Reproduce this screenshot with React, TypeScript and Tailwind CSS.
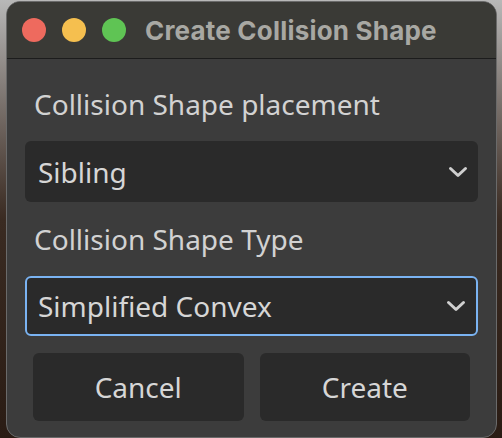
import React from "react";

function Chevron() {
  return (
    <svg width="20" height="12" viewBox="0 0 20 12" fill="none">
      <path d="M2.5 2.5L10 9.5L17.5 2.5" stroke="#cfcfcf" strokeWidth="3" strokeLinecap="round" strokeLinejoin="round" />
    </svg>
  );
}

function Select({ value, focused }: { value: string; focused?: boolean }) {
  return (
    <div
      className={`flex items-center justify-between rounded-[6px] bg-[#2a2a2a] pr-[10px] ${
        focused ? "h-[60px] border-2 border-[#7ab3f2] pl-[11px]" : "h-[61px] pl-[13px]"
      }`}
    >
      <span className="text-[28px] leading-[38px] text-[#d6d6d6]">{value}</span>
      <Chevron />
    </div>
  );
}

export default function App() {
  return (
    <div
      className="w-[502px] h-[438px] overflow-hidden bg-gradient-to-b from-[#b8b8b8] via-[#3a2b22] to-[#2a1c14] pt-[1px] pl-[6px]"
      style={{ fontFamily: '"Noto Sans", sans-serif' }}
    >
      <div className="w-[491px] h-[437px] rounded-[14px] border border-[#6a6a6a] bg-[#3c3c3c] overflow-hidden flex flex-col">
        {/* title bar */}
        <div className="h-[57px] shrink-0 bg-[#3a3a36] border-b border-[#1c1c1c] flex items-center pl-[15px]">
          <div className="flex items-center gap-[16px]">
            <span className="w-[24px] h-[24px] rounded-full bg-[#ee6a5e]" />
            <span className="w-[24px] h-[24px] rounded-full bg-[#f5bf4f]" />
            <span className="w-[24px] h-[24px] rounded-full bg-[#5fc454]" />
          </div>
          <span
            className="ml-[19px] text-[26px] font-bold text-[#a8a8a3] tracking-[0.2px]"
            style={{ fontFamily: '"Inter", "Liberation Sans", sans-serif' }}
          >
            Create Collision Shape
          </span>
        </div>

        {/* body */}
        <div className="flex flex-col px-[18px] pt-[26px]">
          <div className="pl-[9px] text-[28px] leading-[38px] text-[#d2d2d2]">Collision Shape placement</div>
          <div className="mt-[18px]">
            <Select value="Sibling" />
          </div>
          <div className="mt-[18px] pl-[9px] text-[28px] leading-[38px] text-[#d2d2d2]">Collision Shape Type</div>
          <div className="mt-[18px]">
            <Select value="Simplified Convex" focused />
          </div>
          <div className="mt-[17px] px-[8px] grid grid-cols-2 gap-[16px]">
            <button className="h-[68px] rounded-[6px] bg-[#2a2a2a] text-[28px] text-[#d6d6d6]">Cancel</button>
            <button className="h-[68px] rounded-[6px] bg-[#2a2a2a] text-[28px] text-[#d6d6d6]">Create</button>
          </div>
        </div>
      </div>
    </div>
  );
}
